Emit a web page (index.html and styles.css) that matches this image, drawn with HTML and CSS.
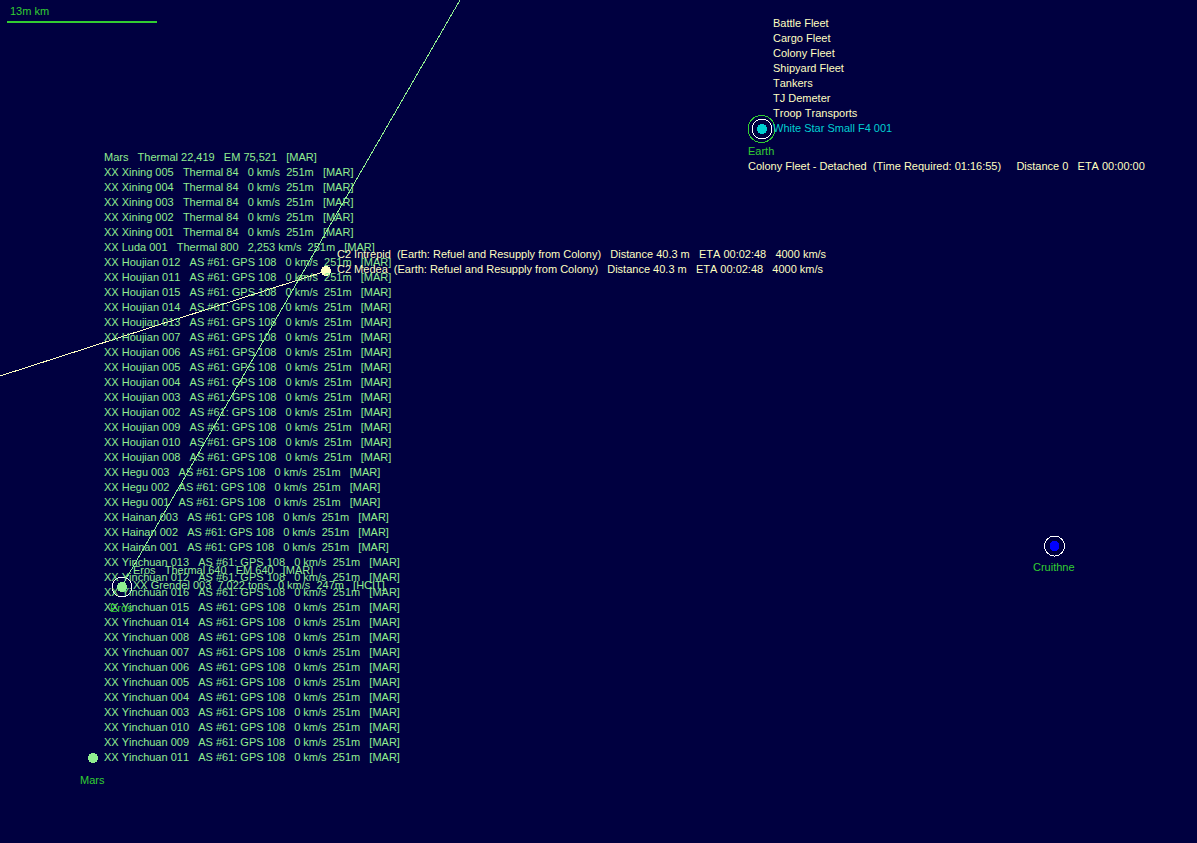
FILE: index.html
```
<!DOCTYPE html>
<html lang="en">
<head>
    <meta charset="UTF-8">
    <meta name="viewport" content="width=device-width, initial-scale=1.0">
    <title>System Map</title>
    <link rel="stylesheet" href="styles.css">
</head>
<body>
    <main class="map">
        <div class="scale">13m km</div>

        <svg class="orbits" aria-hidden="true">
            <line class="contact-track" x1="460" y1="0" x2="122" y2="586"/>
            <line class="fleet-track" x1="0" y1="376" x2="326" y2="271"/>

            <circle class="ring green" cx="761.5" cy="129" r="13.5"/>
            <circle class="ring" cx="762" cy="129" r="10"/>
            <circle class="earth" cx="762" cy="129" r="5"/>

            <circle class="ring" cx="1054.5" cy="546" r="10"/>
            <circle class="cruithne" cx="1054.5" cy="546" r="5"/>

            <circle class="ring" cx="122" cy="587" r="10"/>
            <circle class="contact-dot" cx="122" cy="587" r="5"/>

            <circle class="contact-dot" cx="93" cy="758" r="5"/>
            <circle class="fleet-dot" cx="326" cy="271" r="5"/>
        </svg>

        <ul class="labels contacts mars-contacts">
            <li>Mars   Thermal 22,419   EM 75,521   [MAR]</li>
            <li>XX Xining 005   Thermal 84   0 km/s  251m   [MAR]</li>
            <li>XX Xining 004   Thermal 84   0 km/s  251m   [MAR]</li>
            <li>XX Xining 003   Thermal 84   0 km/s  251m   [MAR]</li>
            <li>XX Xining 002   Thermal 84   0 km/s  251m   [MAR]</li>
            <li>XX Xining 001   Thermal 84   0 km/s  251m   [MAR]</li>
            <li>XX Luda 001   Thermal 800   2,253 km/s  251m   [MAR]</li>
            <li>XX Houjian 012   AS #61: GPS 108   0 km/s  251m   [MAR]</li>
            <li>XX Houjian 011   AS #61: GPS 108   0 km/s  251m   [MAR]</li>
            <li>XX Houjian 015   AS #61: GPS 108   0 km/s  251m   [MAR]</li>
            <li>XX Houjian 014   AS #61: GPS 108   0 km/s  251m   [MAR]</li>
            <li>XX Houjian 013   AS #61: GPS 108   0 km/s  251m   [MAR]</li>
            <li>XX Houjian 007   AS #61: GPS 108   0 km/s  251m   [MAR]</li>
            <li>XX Houjian 006   AS #61: GPS 108   0 km/s  251m   [MAR]</li>
            <li>XX Houjian 005   AS #61: GPS 108   0 km/s  251m   [MAR]</li>
            <li>XX Houjian 004   AS #61: GPS 108   0 km/s  251m   [MAR]</li>
            <li>XX Houjian 003   AS #61: GPS 108   0 km/s  251m   [MAR]</li>
            <li>XX Houjian 002   AS #61: GPS 108   0 km/s  251m   [MAR]</li>
            <li>XX Houjian 009   AS #61: GPS 108   0 km/s  251m   [MAR]</li>
            <li>XX Houjian 010   AS #61: GPS 108   0 km/s  251m   [MAR]</li>
            <li>XX Houjian 008   AS #61: GPS 108   0 km/s  251m   [MAR]</li>
            <li>XX Hegu 003   AS #61: GPS 108   0 km/s  251m   [MAR]</li>
            <li>XX Hegu 002   AS #61: GPS 108   0 km/s  251m   [MAR]</li>
            <li>XX Hegu 001   AS #61: GPS 108   0 km/s  251m   [MAR]</li>
            <li>XX Hainan 003   AS #61: GPS 108   0 km/s  251m   [MAR]</li>
            <li>XX Hainan 002   AS #61: GPS 108   0 km/s  251m   [MAR]</li>
            <li>XX Hainan 001   AS #61: GPS 108   0 km/s  251m   [MAR]</li>
            <li>XX Yinchuan 013   AS #61: GPS 108   0 km/s  251m   [MAR]</li>
            <li>XX Yinchuan 012   AS #61: GPS 108   0 km/s  251m   [MAR]</li>
            <li>XX Yinchuan 016   AS #61: GPS 108   0 km/s  251m   [MAR]</li>
            <li>XX Yinchuan 015   AS #61: GPS 108   0 km/s  251m   [MAR]</li>
            <li>XX Yinchuan 014   AS #61: GPS 108   0 km/s  251m   [MAR]</li>
            <li>XX Yinchuan 008   AS #61: GPS 108   0 km/s  251m   [MAR]</li>
            <li>XX Yinchuan 007   AS #61: GPS 108   0 km/s  251m   [MAR]</li>
            <li>XX Yinchuan 006   AS #61: GPS 108   0 km/s  251m   [MAR]</li>
            <li>XX Yinchuan 005   AS #61: GPS 108   0 km/s  251m   [MAR]</li>
            <li>XX Yinchuan 004   AS #61: GPS 108   0 km/s  251m   [MAR]</li>
            <li>XX Yinchuan 003   AS #61: GPS 108   0 km/s  251m   [MAR]</li>
            <li>XX Yinchuan 010   AS #61: GPS 108   0 km/s  251m   [MAR]</li>
            <li>XX Yinchuan 009   AS #61: GPS 108   0 km/s  251m   [MAR]</li>
            <li>XX Yinchuan 011   AS #61: GPS 108   0 km/s  251m   [MAR]</li>
        </ul>
        <div class="labels body-name mars-name">Mars</div>

        <ul class="labels contacts eros-contacts">
            <li>Eros   Thermal 640   EM 640   [MAR]</li>
            <li>XX Grendel 003  7,022 tons   0 km/s  247m   [HCIT]</li>
        </ul>
        <div class="labels body-name eros-name">Eros</div>

        <ul class="labels fleets transit-fleets">
            <li>C2 Intrepid  (Earth: Refuel and Resupply from Colony)   Distance 40.3 m   ETA 00:02:48   4000 km/s</li>
            <li>C2 Medea  (Earth: Refuel and Resupply from Colony)   Distance 40.3 m   ETA 00:02:48   4000 km/s</li>
        </ul>

        <ul class="labels fleets earth-fleets">
            <li>Battle Fleet</li>
            <li>Cargo Fleet</li>
            <li>Colony Fleet</li>
            <li>Shipyard Fleet</li>
            <li>Tankers</li>
            <li>TJ Demeter</li>
            <li>Troop Transports</li>
            <li class="civilian">White Star Small F4 001</li>
        </ul>
        <ul class="labels earth-name">
            <li class="body-name">Earth</li>
            <li class="fleets">Colony Fleet - Detached  (Time Required: 01:16:55)     Distance 0   ETA 00:00:00</li>
        </ul>

        <div class="labels body-name cruithne-name">Cruithne</div>
    </main>
</body>
</html>
```
FILE: styles.css
```
body {
    margin: 0;
    background-color: #000040;
    font-family: "Liberation Sans", Arial, sans-serif;
    font-size: 11px;
    font-kerning: none;
    line-height: 15px;
}
.map {
    position: relative;
    min-height: 100vh;
    overflow: hidden;
}
.scale {
    width: 147px;
    margin-left: 7px;
    padding: 4px 0 2px 3px;
    border-bottom: 2px solid #32cd32;
    color: #32cd32;
}
.orbits {
    position: absolute;
    top: 0;
    left: 0;
    width: 100%;
    height: 100%;
    shape-rendering: crispEdges;
}
.contact-track {
    stroke: #90ee90;
}
.fleet-track {
    stroke: #ffffc0;
}
.ring {
    fill: none;
    stroke: #ffffff;
}
.green {
    stroke: #32cd32;
}
.earth {
    fill: #00ced1;
}
.cruithne {
    fill: #0000ff;
}
.contact-dot {
    fill: #90ee90;
}
.fleet-dot {
    fill: #ffffc0;
}

/* text blocks pinned next to their object on the map */
.labels {
    position: absolute;
    margin: 0;
    padding: 0;
    list-style: none;
}
.labels li {
    white-space: pre;
}
.contacts {
    color: #90ee90;
}
.fleets {
    color: #ffffc0;
}
.civilian {
    color: #00ced1;
}
.body-name {
    color: #32cd32;
}
.mars-contacts {
    top: 150px;
    left: 104px;
}
.mars-name {
    top: 773px;
    left: 80px;
}
.eros-contacts {
    top: 563px;
    left: 133px;
}
.eros-name {
    top: 601px;
    left: 110px;
}
.transit-fleets {
    top: 247px;
    left: 337px;
}
.earth-fleets {
    top: 16px;
    left: 773px;
}
.earth-name {
    top: 144px;
    left: 748px;
}
.cruithne-name {
    top: 560px;
    left: 1033px;
}
```
